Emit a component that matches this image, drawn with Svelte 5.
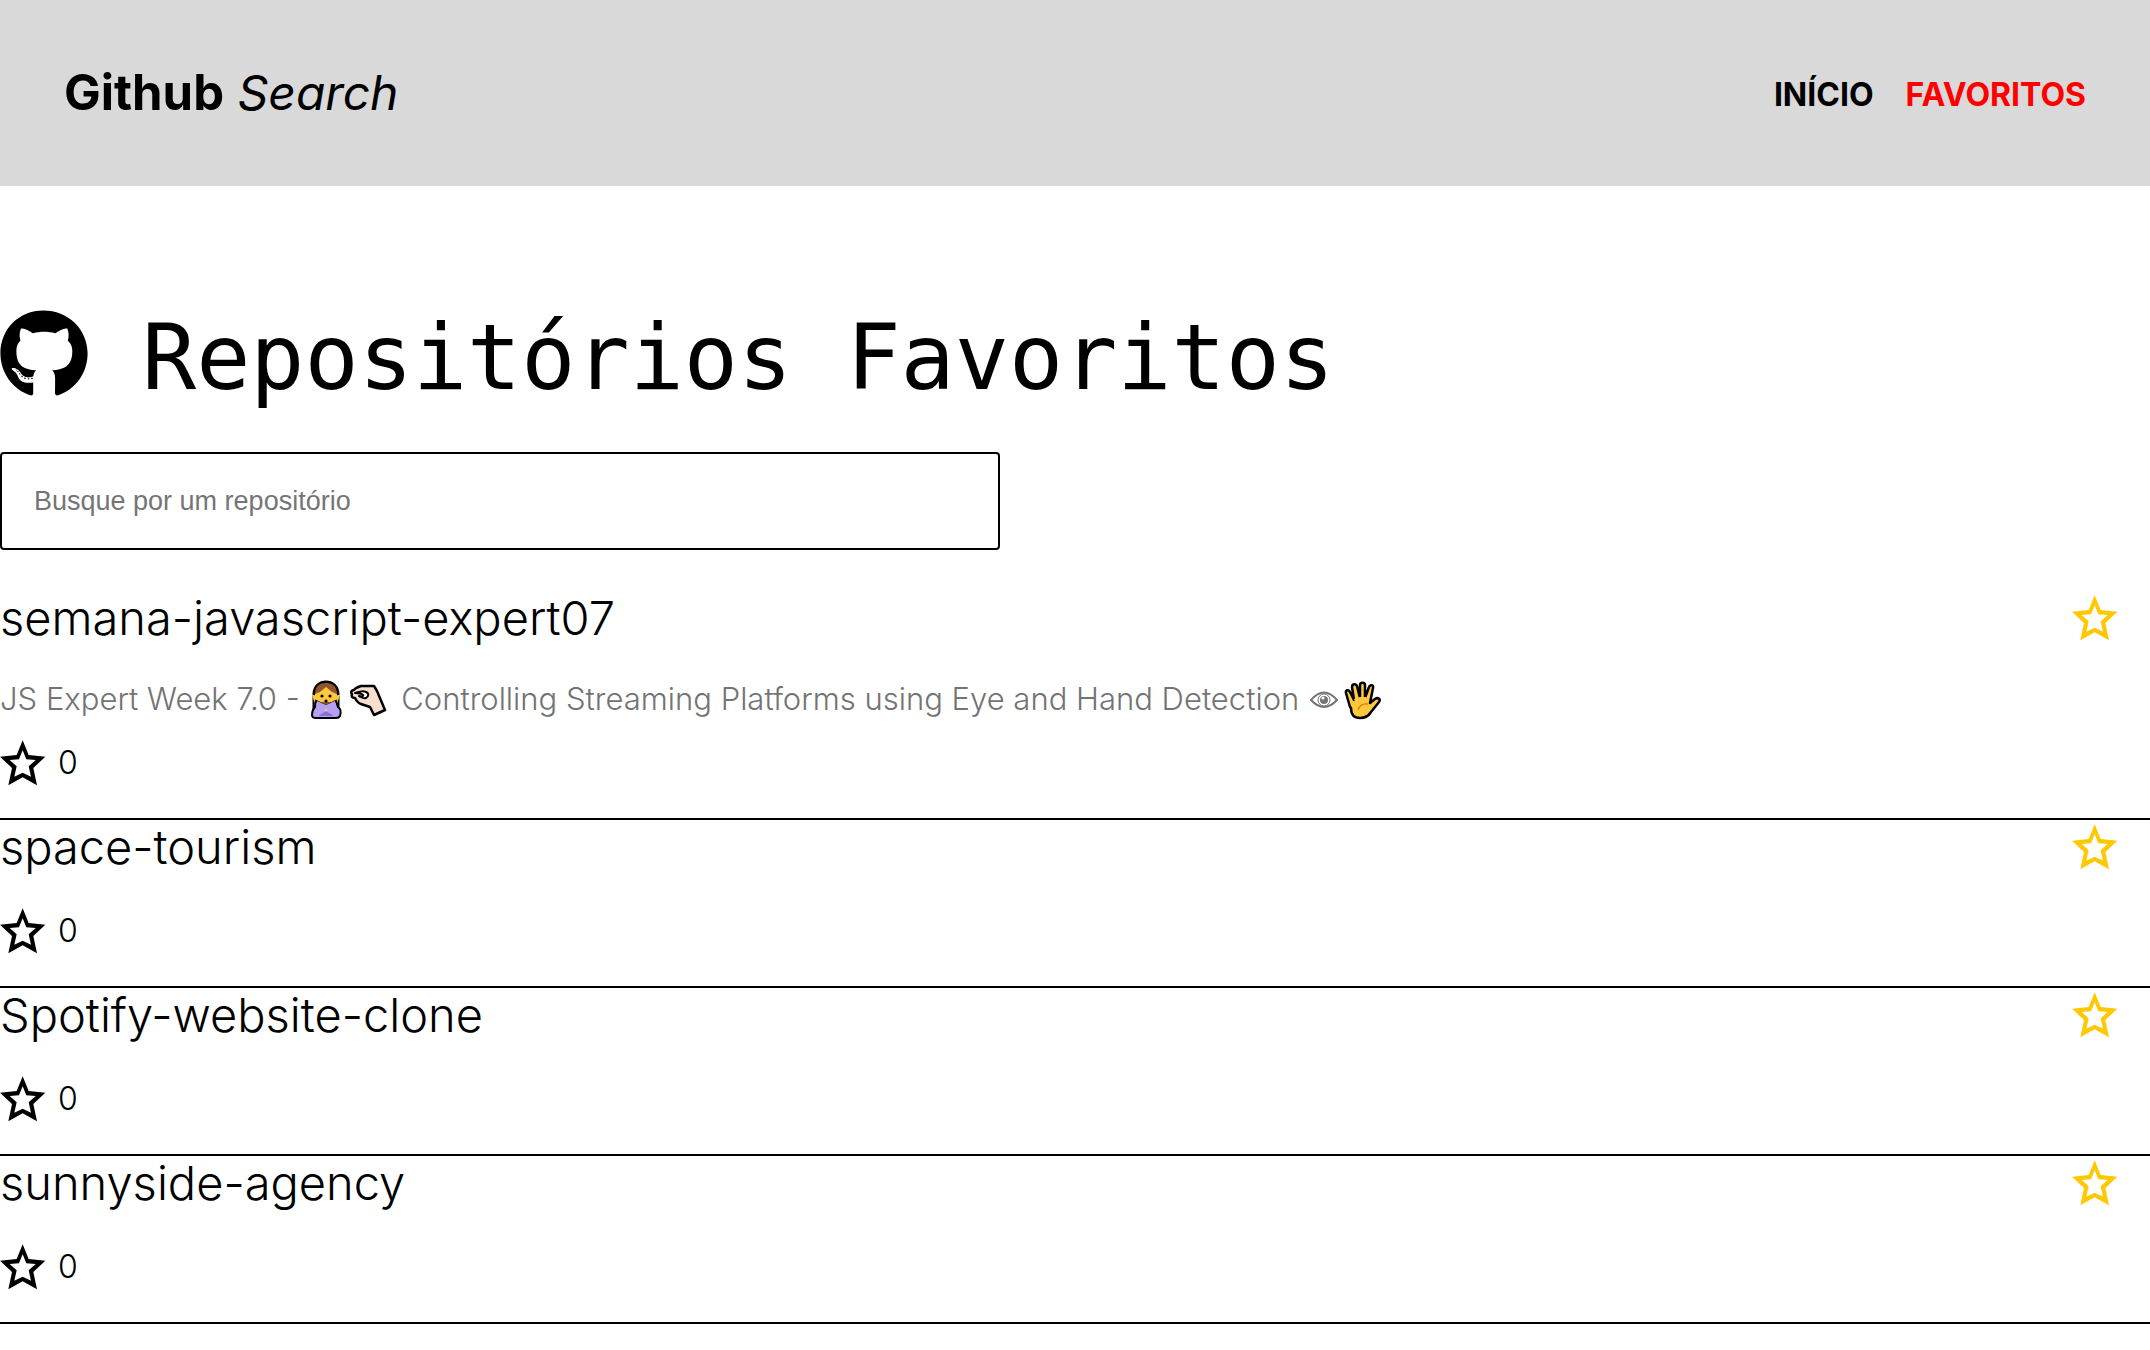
<script lang="ts">
  type Repo = { name: string; stars: number; described?: boolean };

  const repos: Repo[] = [
    { name: 'semana-javascript-expert07', stars: 0, described: true },
    { name: 'space-tourism', stars: 0 },
    { name: 'Spotify-website-clone', stars: 0 },
    { name: 'sunnyside-agency', stars: 0 },
  ];

  let query = $state('');
  const shown = $derived(repos.filter((r) => r.name.toLowerCase().includes(query.toLowerCase())));
</script>

{#snippet star()}
  <svg class="star" viewBox="0 0 138 138" aria-hidden="true">
    <path
      fill="currentColor"
      fill-rule="evenodd"
      d="M68 1 86 45 136 50 100 84 111 136 68 112 25 136 36 84 0 50 50 45ZM68 31 57 58 29 60 50 79 43 110 68 98 93 110 86 79 107 60 79 58Z"
    />
  </svg>
{/snippet}

<header>
  <a class="logo" href="#inicio"><strong>Github</strong> <em>Search</em></a>
  <nav>
    <a href="#inicio">INÍCIO</a>
    <a class="active" href="#favoritos" aria-current="page">FAVORITOS</a>
  </nav>
</header>

<main>
  <h1>
    <svg class="mark" viewBox="0 0 496 512" aria-hidden="true">
      <path d="M165.9 397.4c0 2-2.3 3.6-5.2 3.6-3.3.3-5.6-1.3-5.6-3.6 0-2 2.3-3.6 5.2-3.6 3-.3 5.6 1.3 5.6 3.6zm-31.1-4.5c-.7 2 1.3 4.3 4.3 4.9 2.6 1 5.6 0 6.2-2s-1.3-4.3-4.3-5.2c-2.6-.7-5.5.3-6.2 2.3zm44.2-1.7c-2.9.7-4.9 2.6-4.6 4.9.3 2 2.9 3.3 5.9 2.6 2.9-.7 4.9-2.6 4.6-4.6-.3-1.9-3-3.2-5.9-2.9zM244.8 8C106.1 8 0 113.3 0 252c0 110.9 69.8 205.8 169.5 239.2 12.8 2.3 17.3-5.6 17.3-12.1 0-6.2-.3-40.4-.3-61.4 0 0-70 15-84.7-29.8 0 0-11.4-29.1-27.8-36.6 0 0-22.9-15.7 1.6-15.4 0 0 24.9 2 38.6 25.8 21.9 38.6 58.6 27.5 72.9 20.9 2.3-16 8.8-27.1 16-33.7-55.9-6.2-112.3-14.3-112.3-110.5 0-27.5 7.6-41.3 23.6-58.9-2.6-6.5-11.1-33.3 2.6-67.9 20.9-6.5 69 27 69 27 20-5.6 41.5-8.5 62.8-8.5s42.8 2.9 62.8 8.5c0 0 48.1-33.6 69-27 13.7 34.7 5.2 61.4 2.6 67.9 16 17.7 25.8 31.5 25.8 58.9 0 96.5-58.9 104.2-114.8 110.5 9.2 7.9 17 22.9 17 46.4 0 33.7-.3 75.4-.3 83.6 0 6.5 4.6 14.4 17.3 12.1C428.2 457.8 496 362.9 496 252 496 113.3 383.5 8 244.8 8zM97.2 352.9c-1.3 1-1 3.3.7 5.2 1.6 1.6 3.9 2.3 5.2 1 1.3-1 1-3.3-.7-5.2-1.6-1.6-3.9-2.3-5.2-1zm-10.8-8.1c-.7 1.3.3 2.9 2.3 3.9 1.6 1 3.6.7 4.3-.7.7-1.3-.3-2.9-2.3-3.9-2-.6-3.6-.3-4.3.7zm32.4 35.6c-1.6 1.3-1 4.3 1.3 6.2 2.3 2.3 5.2 2.6 6.5 1 1.3-1.3.7-4.3-1.3-6.2-2.2-2.3-5.2-2.6-6.5-1zm-11.4-14.7c-1.6 1-1.6 3.6 0 5.9 1.6 2.3 4.3 3.3 5.6 2.3 1.6-1.3 1.6-3.9 0-6.2-1.4-2.3-4-3.3-5.6-2z" />
    </svg>
    Repositórios Favoritos
  </h1>

  <input type="text" placeholder="Busque por um repositório" aria-label="Busque por um repositório" bind:value={query} />

  <ul>
    {#each shown as repo (repo.name)}
      <li>
        <div class="top">
          <h2>{repo.name}</h2>
          <button type="button" aria-label="Remover {repo.name} dos favoritos">{@render star()}</button>
        </div>
        {#if repo.described}
          <p class="description">
            JS Expert Week 7.0 -
            <svg class="emoji" viewBox="2 0 42 40" role="img" aria-label="gesto de não">
              <path d="M8 35V14C8 6 14 2 20 2s12 4 12 12v21Z" fill="#8e562e" stroke="#000" stroke-width="3" />
              <path d="M9 15c0-4 5-6 11-9 6 3 11 5 11 9v7H9Z" fill="#ffc83d" />
              <path d="M9 14C9 6 14 3 20 3s11 3 11 11l-5-2-6-5-6 5Z" fill="#8e562e" />
              <path d="M6 15c3-1 5 2 6 5l3 4H9Zm28 0c-3-1-5 2-6 5l-3 4h6Z" fill="#ffc83d" />
              <path d="m10 21 10 5 10-5 2 6c3 2 3 6 2 9-1 2-2 2-4 2H10c-3 0-4-1-4-3 0-4 1-6 3-8Z" fill="#b4a0f5" stroke="#000" stroke-width="2" />
              <path d="m11 21 9 4 9-4 1 5-5 4 3 6H12l3-6-5-4Z" fill="#b4a0f5" />
              <path d="m12 36 8-5 8 5Z" fill="#8b6fe0" />
              <circle cx="16" cy="16" r="1.6" />
              <circle cx="24" cy="16" r="1.6" />
              <circle cx="20" cy="21" r="1.6" />
              <circle cx="20" cy="30" r="1.3" fill="#ffc83d" />
            </svg><svg class="emoji" viewBox="2 0 42 40" role="img" aria-label="mão beliscando">
              <path d="M13 6h13l3 5 8 19-11 5-4-8-9-3c-3-1-5-4-6-6-2 0-4-1-3-4-2-2 0-4 2-4 1-2 4-3 7-4Z" fill="#f7dece" stroke="#000" stroke-width="2.5" stroke-linejoin="round" />
              <path d="M7 13c3-1 8-3 11-1 3 1 3 4 0 6-2 1-5-1-7-2 3 1 5 0 4-1-2-2-5-2-8-2Z" fill="#fff" stroke="#000" stroke-width="2" stroke-linejoin="round" />
            </svg>
            Controlling Streaming Platforms using Eye and Hand Detection
            <svg class="emoji eye" viewBox="0 0 33 40" role="img" aria-label="olho">
              <path d="M3 20q13-15 26 0-13 14-26 0Z" fill="none" stroke="currentColor" stroke-width="2" />
              <circle cx="16" cy="20" r="6" fill="none" stroke="currentColor" stroke-width="1" />
              <circle cx="16" cy="20" r="4" fill="currentColor" />
              <circle cx="15" cy="18" r="1.5" fill="#fff" />
            </svg><svg class="emoji" viewBox="0 0 42 40" role="img" aria-label="mão aberta">
              <path
                d="M9 27 5 13c-1-3 3-4 4-1l4 8L11 7c0-3 4-4 5-1l3 12V5c0-3 5-3 5 0v13l4-11c1-3 5-2 4 1l-3 15 5-4c3-2 6 0 4 3l-8 10c-3 5-7 6-11 6-6 0-9-4-9-10Z"
                fill="#ffc83d" stroke="#000" stroke-width="2.5" stroke-linejoin="round" />
              <path d="M13 19l2 5h11l2-6-4-1h-5Z" fill="#ffc83d" />
              <path d="M17 30q2-7 10-6" fill="none" stroke="#d67d00" stroke-width="1.3" />
            </svg>
          </p>
        {/if}
        <div class="count">{@render star()}<span>{repo.stars}</span></div>
      </li>
    {/each}
  </ul>
</main>

<style>
  :global(body) {
    background: #fff;
    color: #000;
    font-family: Inter, 'Liberation Sans', sans-serif;
  }

  header {
    display: flex;
    align-items: center;
    justify-content: space-between;
    padding: 64px;
    background: #d9d9d9;
  }

  header a {
    color: #000;
    text-decoration: none;
  }

  .logo {
    font-size: 48px;
    line-height: 58px;
  }

  .logo strong {
    font-size: 49px;
  }

  nav {
    display: flex;
    gap: 32px;
    padding-top: 4px;
    font-size: 32px;
    line-height: 40px;
    font-weight: 700;
  }

  nav .active {
    color: #f00;
  }

  main {
    padding-top: 112px;
  }

  h1 {
    display: flex;
    align-items: center;
    gap: 54px;
    margin: 0 0 34px;
    font: 400 90px/120px 'DejaVu Sans Mono', monospace;
  }

  .mark {
    width: 88px;
    height: 90px;
    padding-bottom: 8px;
  }

  input {
    box-sizing: border-box;
    display: block;
    width: 100%;
    max-width: 1000px;
    height: 98px;
    margin-bottom: 41px;
    padding: 0 32px;
    border: 2px solid #000;
    border-radius: 4px;
    font: 27px 'Liberation Sans', sans-serif;
  }

  input::placeholder {
    color: #757575;
  }

  ul {
    margin: 0;
    padding: 0;
    list-style: none;
  }

  li {
    display: flex;
    flex-direction: column;
    border-bottom: 2px solid #000;
    padding-bottom: 32px;
    font-weight: 300;
  }

  .top {
    display: flex;
    align-items: center;
    justify-content: space-between;
    padding-right: 32px;
    margin-bottom: 34px;
  }

  h2 {
    margin: 0;
    font-size: 47px;
    line-height: 54px;
    font-weight: 300;
  }

  button {
    display: flex;
    padding: 0;
    border: 0;
    background: none;
    color: #ffc800;
    cursor: pointer;
  }

  .star {
    display: block;
    width: 46px;
    height: 46px;
  }

  .description {
    margin: 0 0 20px;
    color: #737373;
    font-size: 31px;
    line-height: 40px;
  }

  .emoji {
    width: 42px;
    height: 40px;
    vertical-align: -10px;
  }

  .eye {
    width: 33px;
  }

  .count {
    display: flex;
    align-items: center;
    gap: 12px;
    font-size: 32px;
    line-height: 40px;
  }
</style>
